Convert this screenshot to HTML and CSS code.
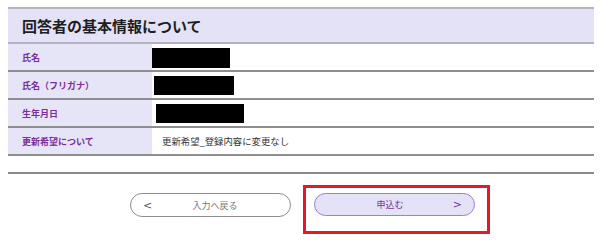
FILE: index.html
```html
<!DOCTYPE html>
<html lang="ja">
<head>
<meta charset="utf-8">
<link rel="stylesheet" href="styles.css">
</head>
<body>
<div class="page">
  <section class="info">
    <h1 class="info-title">回答者の基本情報について</h1>
    <div class="row">
      <div class="label">氏名</div>
      <div class="value"><span class="mask mask-1"></span></div>
    </div>
    <div class="row">
      <div class="label">氏名（フリガナ）</div>
      <div class="value"><span class="mask mask-2"></span></div>
    </div>
    <div class="row">
      <div class="label">生年月日</div>
      <div class="value"><span class="mask mask-3"></span></div>
    </div>
    <div class="row">
      <div class="label">更新希望について</div>
      <div class="value text">更新希望_登録内容に変更なし</div>
    </div>
  </section>
  <hr class="divider">
  <div class="actions">
    <button class="btn btn-back"><span class="arrow">&lt;</span><span class="btn-label">入力へ戻る</span></button>
    <div class="highlight">
      <button class="btn btn-submit"><span class="btn-label">申込む</span><span class="arrow">&gt;</span></button>
    </div>
  </div>
</div>
</body>
</html>
```

FILE: styles.css
```css
html, body {
  margin: 0;
  padding: 0;
  background: #ffffff;
}
body {
  font-family: "Noto Sans CJK JP", "Noto Sans", sans-serif;
}
.page {
  margin: 7px 6px 0 8px;
}
.info-title {
  margin: 0;
  height: 33px;
  line-height: 33px;
  padding-left: 14px;
  font-size: 15px;
  font-weight: bold;
  color: #1e1e1e;
  background: #e4e2f6;
  border-top: 2px solid #b4b2c2;
  border-bottom: 2px solid #b4b2c2;
  letter-spacing: 0;
}
.row {
  display: flex;
  height: 26px;
  border-bottom: 2px solid #8e8e8e;
}
.label {
  width: 130px;
  flex: 0 0 auto;
  padding-left: 14px;
  background: #e6e4f7;
  display: flex;
  align-items: center;
  font-size: 9px;
  font-weight: bold;
  color: #7b2e9a;
}
.value {
  flex: 1;
  display: flex;
  align-items: center;
  font-size: 9.4px;
  color: #333333;
}
.value.text {
  padding-left: 10px;
}
.mask {
  display: inline-block;
  background: #000000;
}
.mask-1 { width: 78px; height: 20px; margin-top: 2px; }
.mask-2 { width: 80px; height: 19px; margin-left: 2px; }
.mask-3 { width: 88px; height: 19px; margin-left: 4px; }
.divider {
  margin: 16px 0 0 0;
  border: 0;
  border-top: 2px solid #8a8a8a;
  height: 0;
}
.actions {
  display: flex;
  align-items: flex-start;
  gap: 12px;
  padding-left: 122px;
  margin-top: 11px;
}
.btn {
  box-sizing: border-box;
  width: 161px;
  height: 24px;
  border-radius: 12px;
  display: flex;
  align-items: center;
  padding: 0 12px;
  font-family: "Noto Sans CJK JP", "Noto Sans", sans-serif;
  font-size: 9px;
  cursor: pointer;
}
.btn-label {
  flex: 1;
  text-align: center;
}
.arrow {
  font-family: "DejaVu Sans", sans-serif;
  font-size: 11px;
}
.btn-back {
  margin-top: 8px;
  background: #ffffff;
  border: 1px solid #8c8c8c;
  color: #777777;
}
.btn-back .arrow {
  color: #555555;
}
.btn-submit {
  height: 23px;
  background: #e4e2f6;
  border: 1px solid #a77ccc;
  color: #7a3496;
}
.btn-submit .arrow {
  color: #7a3496;
}
.highlight {
  border: 3px solid #e5172b;
  padding: 5px 12px 15px 8px;
}
```
